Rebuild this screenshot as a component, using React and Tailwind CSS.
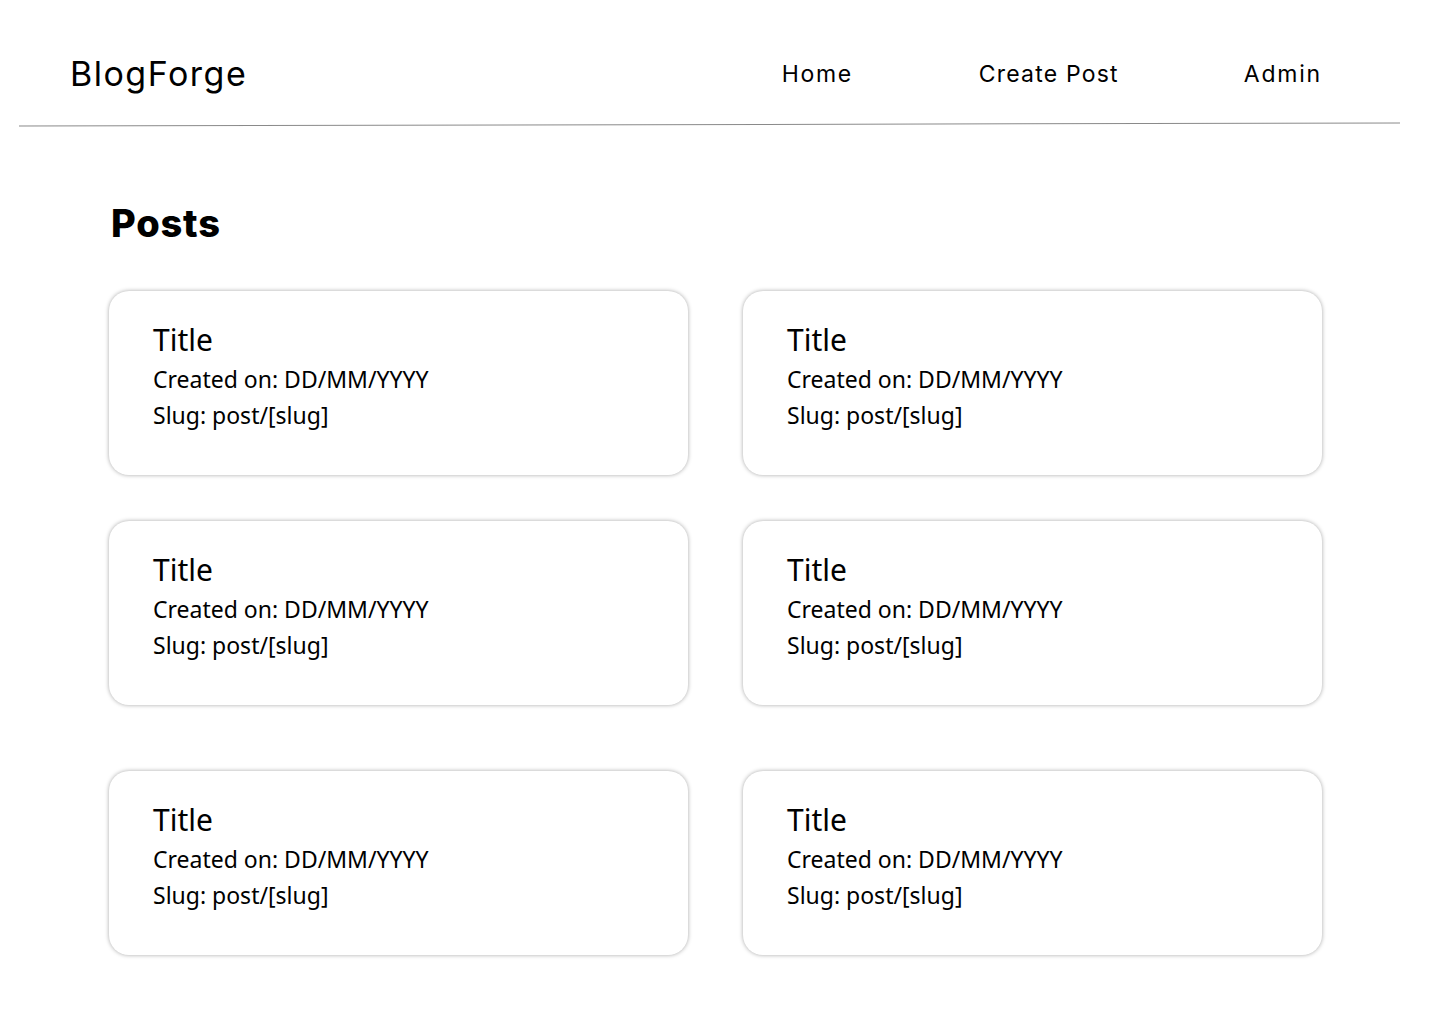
import React from "react";

function Card() {
  return (
    <div className="h-[184px] rounded-[20px] bg-white shadow-[0_0_4px_rgba(0,0,0,0.35)] pl-[44px] pt-[30px] font-['Noto_Sans',sans-serif] text-black">
      <div className="text-[30px] leading-[38px]">Title</div>
      <div className="text-[23px] leading-[36px] mt-[2px]">Created on: DD/MM/YYYY</div>
      <div className="text-[23px] leading-[36px]">Slug: post/[slug]</div>
    </div>
  );
}

function Row({ className = "" }) {
  return (
    <div className={"grid grid-cols-[579px_579px] gap-x-[55px] " + className}>
      <Card />
      <Card />
    </div>
  );
}

export default function App() {
  return (
    <div className="min-h-screen w-[1440px] bg-white">
      <header className="flex items-center h-[124px] pt-[24px] pl-[70px] pr-[118px] font-['Inter',sans-serif] text-black">
        <div className="text-[34px] leading-none tracking-[1.5px]">BlogForge</div>
        <nav className="ml-auto flex items-center text-[23px] leading-none tracking-[1.2px]">
          <span className="tracking-[1.6px]">Home</span>
          <span className="ml-[126px]">Create Post</span>
          <span className="ml-[125px] tracking-[1.8px]">Admin</span>
        </nav>
      </header>
      <div className="ml-[19px] w-[1381px] h-px bg-[#8a8a8a] -rotate-[0.12deg]" />
      <main className="pl-[109px] pt-[74px] pb-[60px]">
        <h1 className="font-['Inter',sans-serif] font-extrabold text-[38px] leading-[48px] pl-[2px] tracking-[0.8px] text-black">Posts</h1>
        <Row className="mt-[44px]" />
        <Row className="mt-[46px]" />
        <Row className="mt-[66px]" />
      </main>
    </div>
  );
}
